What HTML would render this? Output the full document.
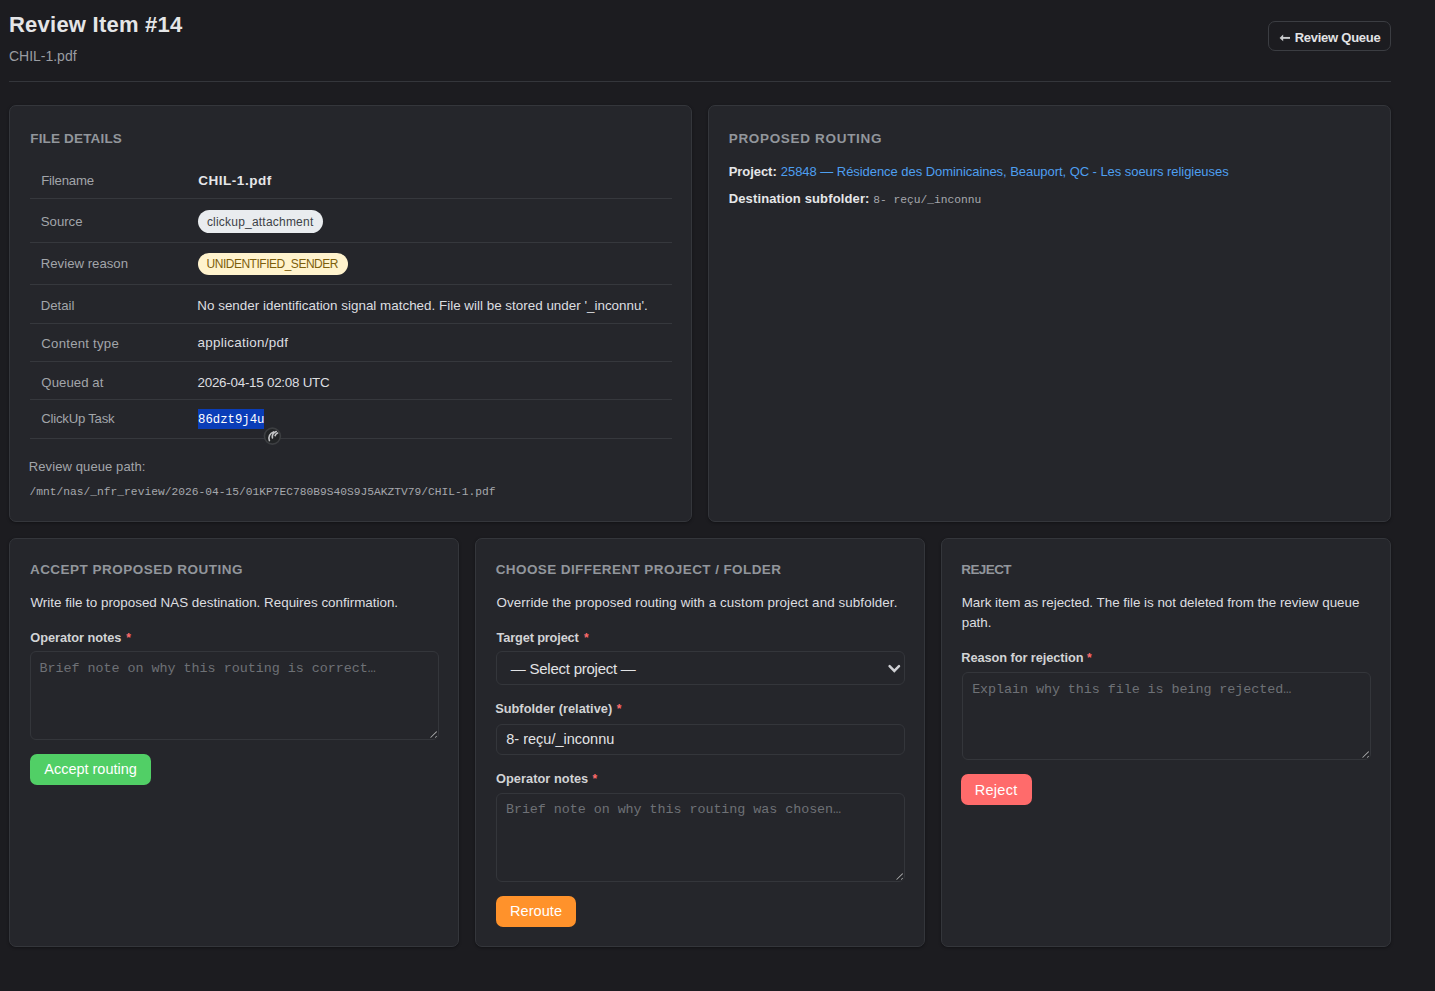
<!DOCTYPE html>
<html><head><meta charset="utf-8"><title>Review Item #14</title>
<style>
html,body{margin:0;padding:0}
body{width:1435px;height:991px;overflow:hidden;position:relative;background:#1c1c20;font-family:"Liberation Sans",sans-serif}
.b{position:absolute;box-sizing:border-box}
.t{position:absolute;white-space:pre;line-height:1.15}
</style></head><body>
<div id="hr" class="b" style="left:9px;top:81px;width:1382px;height:1px;background:#34363b"></div>
<div id="backbtn" class="b" style="left:1268px;top:21px;width:123px;height:30px;border:1px solid #3b3d42;border-radius:7px"></div>
<div id="card1" class="b" style="left:9px;top:105px;width:683px;height:417px;background:#25262b;border:1px solid #34363b;border-radius:7px;box-shadow:0 1px 3px rgba(0,0,0,.35)"></div>
<div id="card2" class="b" style="left:708px;top:105px;width:683px;height:417px;background:#25262b;border:1px solid #34363b;border-radius:7px;box-shadow:0 1px 3px rgba(0,0,0,.35)"></div>
<div id="card3" class="b" style="left:9px;top:538px;width:450px;height:409px;background:#25262b;border:1px solid #34363b;border-radius:7px;box-shadow:0 1px 3px rgba(0,0,0,.35)"></div>
<div id="card4" class="b" style="left:475px;top:538px;width:450px;height:409px;background:#25262b;border:1px solid #34363b;border-radius:7px;box-shadow:0 1px 3px rgba(0,0,0,.35)"></div>
<div id="card5" class="b" style="left:941px;top:538px;width:450px;height:409px;background:#25262b;border:1px solid #34363b;border-radius:7px;box-shadow:0 1px 3px rgba(0,0,0,.35)"></div>
<div id="rl0" class="b" style="left:30px;top:198px;width:642px;height:1px;background:#36383d"></div>
<div id="rl1" class="b" style="left:30px;top:242px;width:642px;height:1px;background:#36383d"></div>
<div id="rl2" class="b" style="left:30px;top:284px;width:642px;height:1px;background:#36383d"></div>
<div id="rl3" class="b" style="left:30px;top:323px;width:642px;height:1px;background:#36383d"></div>
<div id="rl4" class="b" style="left:30px;top:361px;width:642px;height:1px;background:#36383d"></div>
<div id="rl5" class="b" style="left:30px;top:399px;width:642px;height:1px;background:#36383d"></div>
<div id="rl6" class="b" style="left:30px;top:438px;width:642px;height:1px;background:#36383d"></div>
<div id="pill1" class="b" style="left:198px;top:210px;width:125px;height:23px;background:#e9ecef;border-radius:12px"></div>
<div id="pill2" class="b" style="left:198px;top:253px;width:150px;height:22px;background:#fff3cd;border-radius:11px"></div>
<div id="hl" class="b" style="left:198px;top:409px;width:66px;height:20px;background:#0a3db8"></div>
<div id="ta1" class="b" style="left:30px;top:651px;width:409px;height:89px;border:1px solid #34363b;border-radius:6px;background:#25262b"></div>
<div id="sel" class="b" style="left:496px;top:651px;width:409px;height:34px;border:1px solid #34363b;border-radius:6px;background:#25262b"></div>
<div id="inp" class="b" style="left:496px;top:724px;width:409px;height:31px;border:1px solid #34363b;border-radius:6px;background:#25262b"></div>
<div id="ta2" class="b" style="left:496px;top:793px;width:409px;height:89px;border:1px solid #34363b;border-radius:6px;background:#25262b"></div>
<div id="ta3" class="b" style="left:962px;top:672px;width:409px;height:88px;border:1px solid #34363b;border-radius:6px;background:#25262b"></div>
<div id="btn1" class="b" style="left:30px;top:754px;width:121px;height:31px;background:#51cf66;border-radius:7px"></div>
<div id="btn2" class="b" style="left:496px;top:896px;width:80px;height:31px;background:#ff922b;border-radius:7px"></div>
<div id="btn3" class="b" style="left:961px;top:774px;width:71px;height:31px;background:#ff6b6b;border-radius:7px"></div>
<div id="title" class="t" style="left:9.00px;top:11.82px;font-size:22px;font-weight:bold;font-family:'Liberation Sans', sans-serif;color:#e4e5e7;letter-spacing:0.231px">Review Item #14</div>
<div id="sub" class="t" style="left:8.95px;top:47.72px;font-size:14px;font-weight:normal;font-family:'Liberation Sans', sans-serif;color:#9a9da2;letter-spacing:-0.010px">CHIL-1.pdf</div>
<div id="back" class="t" style="left:1294.70px;top:31.00px;font-size:13px;font-weight:bold;font-family:'Liberation Sans', sans-serif;color:#e2e3e5;letter-spacing:-0.261px">Review Queue</div>
<div id="s1" class="t" style="left:30.27px;top:131.40px;font-size:13.5px;font-weight:bold;font-family:'Liberation Sans', sans-serif;color:#92969c;letter-spacing:0.169px">FILE DETAILS</div>
<div id="s2" class="t" style="left:728.70px;top:131.40px;font-size:13.5px;font-weight:bold;font-family:'Liberation Sans', sans-serif;color:#92969c;letter-spacing:0.684px">PROPOSED ROUTING</div>
<div id="s3" class="t" style="left:29.90px;top:562.32px;font-size:13.5px;font-weight:bold;font-family:'Liberation Sans', sans-serif;color:#92969c;letter-spacing:0.488px">ACCEPT PROPOSED ROUTING</div>
<div id="s4" class="t" style="left:495.70px;top:562.32px;font-size:13.5px;font-weight:bold;font-family:'Liberation Sans', sans-serif;color:#92969c;letter-spacing:0.407px">CHOOSE DIFFERENT PROJECT / FOLDER</div>
<div id="s5" class="t" style="left:961.32px;top:562.32px;font-size:13.5px;font-weight:bold;font-family:'Liberation Sans', sans-serif;color:#92969c;letter-spacing:-0.600px">REJECT</div>
<div id="l1" class="t" style="left:41.13px;top:172.72px;font-size:13.2px;font-weight:normal;font-family:'Liberation Sans', sans-serif;color:#a2a5aa;letter-spacing:-0.167px">Filename</div>
<div id="l2" class="t" style="left:40.75px;top:213.82px;font-size:13.2px;font-weight:normal;font-family:'Liberation Sans', sans-serif;color:#a2a5aa;letter-spacing:0.000px">Source</div>
<div id="l3" class="t" style="left:40.75px;top:256.22px;font-size:13.2px;font-weight:normal;font-family:'Liberation Sans', sans-serif;color:#a2a5aa;letter-spacing:0.000px">Review reason</div>
<div id="l4" class="t" style="left:40.75px;top:297.50px;font-size:13.2px;font-weight:normal;font-family:'Liberation Sans', sans-serif;color:#a2a5aa;letter-spacing:0.000px">Detail</div>
<div id="l5" class="t" style="left:41.32px;top:335.60px;font-size:13.2px;font-weight:normal;font-family:'Liberation Sans', sans-serif;color:#a2a5aa;letter-spacing:0.245px">Content type</div>
<div id="l6" class="t" style="left:41.32px;top:374.90px;font-size:13.2px;font-weight:normal;font-family:'Liberation Sans', sans-serif;color:#a2a5aa;letter-spacing:0.056px">Queued at</div>
<div id="l7" class="t" style="left:41.32px;top:411.22px;font-size:13.2px;font-weight:normal;font-family:'Liberation Sans', sans-serif;color:#a2a5aa;letter-spacing:-0.245px">ClickUp Task</div>
<div id="v1" class="t" style="left:198.22px;top:172.72px;font-size:13.5px;font-weight:bold;font-family:'Liberation Sans', sans-serif;color:#e6e7e9;letter-spacing:0.530px">CHIL-1.pdf</div>
<div id="v2" class="t" style="left:206.90px;top:215.82px;font-size:12px;font-weight:normal;font-family:'Liberation Sans', sans-serif;color:#3d4247;letter-spacing:0.212px">clickup_attachment</div>
<div id="v3" class="t" style="left:206.57px;top:258.10px;font-size:12px;font-weight:normal;font-family:'Liberation Sans', sans-serif;color:#7d5f0c;letter-spacing:-0.490px">UNIDENTIFIED_SENDER</div>
<div id="v4" class="t" style="left:197.32px;top:297.50px;font-size:13.4px;font-weight:normal;font-family:'Liberation Sans', sans-serif;color:#dddee0;letter-spacing:0.012px">No sender identification signal matched. File will be stored under '_inconnu'.</div>
<div id="v5" class="t" style="left:197.52px;top:335.40px;font-size:13.4px;font-weight:normal;font-family:'Liberation Sans', sans-serif;color:#dddee0;letter-spacing:0.289px">application/pdf</div>
<div id="v6" class="t" style="left:197.52px;top:374.90px;font-size:13.4px;font-weight:normal;font-family:'Liberation Sans', sans-serif;color:#dddee0;letter-spacing:-0.251px">2026-04-15 02:08 UTC</div>
<div id="v7" class="t" style="left:198.00px;top:413.21px;font-size:12.3px;font-weight:normal;font-family:'Liberation Mono', monospace;color:#ffffff;letter-spacing:0.000px">86dzt9j4u</div>
<div id="rqp" class="t" style="left:28.80px;top:459.50px;font-size:13px;font-weight:normal;font-family:'Liberation Sans', sans-serif;color:#a2a5aa;letter-spacing:0.101px">Review queue path:</div>
<div id="path" class="t" style="left:29.57px;top:485.50px;font-size:11.25px;font-weight:normal;font-family:'Liberation Mono', monospace;color:#a5a8ad;letter-spacing:0.003px">/mnt/nas/_nfr_review/2026-04-15/01KP7EC780B9S40S9J5AKZTV79/CHIL-1.pdf</div>
<div id="pj" class="t" style="left:728.70px;top:164.60px;font-size:13px;font-weight:bold;font-family:'Liberation Sans', sans-serif;color:#e6e7e9;letter-spacing:-0.051px">Project:</div>
<div id="link" class="t" style="left:780.85px;top:164.60px;font-size:13px;font-weight:normal;font-family:'Liberation Sans', sans-serif;color:#4e9ff0;letter-spacing:-0.053px">25848 &mdash; R&eacute;sidence des Dominicaines, Beauport, QC - Les soeurs religieuses</div>
<div id="ds" class="t" style="left:728.70px;top:192.00px;font-size:13px;font-weight:bold;font-family:'Liberation Sans', sans-serif;color:#e6e7e9;letter-spacing:0.133px">Destination subfolder:</div>
<div id="dsv" class="t" style="left:873.13px;top:194.00px;font-size:11.25px;font-weight:normal;font-family:'Liberation Mono', monospace;color:#a5a8ad;letter-spacing:0.006px">8- re&ccedil;u/_inconnu</div>
<div id="d1" class="t" style="left:30.47px;top:594.90px;font-size:13.4px;font-weight:normal;font-family:'Liberation Sans', sans-serif;color:#dddee0;letter-spacing:0.003px">Write file to proposed NAS destination. Requires confirmation.</div>
<div id="d2" class="t" style="left:496.47px;top:594.90px;font-size:13.4px;font-weight:normal;font-family:'Liberation Sans', sans-serif;color:#dddee0;letter-spacing:0.087px">Override the proposed routing with a custom project and subfolder.</div>
<div id="d3" class="t" style="left:961.70px;top:594.50px;font-size:13.4px;font-weight:normal;font-family:'Liberation Sans', sans-serif;color:#dddee0;letter-spacing:-0.015px">Mark item as rejected. The file is not deleted from the review queue</div>
<div id="d3b" class="t" style="left:961.70px;top:614.60px;font-size:13.4px;font-weight:normal;font-family:'Liberation Sans', sans-serif;color:#dddee0;letter-spacing:0.000px">path.</div>
<div id="f1" class="t" style="left:30.27px;top:630.72px;font-size:12.8px;font-weight:bold;font-family:'Liberation Sans', sans-serif;color:#d2d3d5;letter-spacing:-0.048px">Operator notes</div>
<div id="f1a" class="t" style="left:126.27px;top:631.72px;font-size:12px;font-weight:bold;font-family:'Liberation Sans', sans-serif;color:#ff6b6b;letter-spacing:0.000px">*</div>
<div id="f2" class="t" style="left:496.60px;top:631.00px;font-size:12.8px;font-weight:bold;font-family:'Liberation Sans', sans-serif;color:#d2d3d5;letter-spacing:-0.166px">Target project</div>
<div id="f2a" class="t" style="left:583.95px;top:632.00px;font-size:12px;font-weight:bold;font-family:'Liberation Sans', sans-serif;color:#ff6b6b;letter-spacing:0.000px">*</div>
<div id="f3" class="t" style="left:495.13px;top:702.32px;font-size:12.8px;font-weight:bold;font-family:'Liberation Sans', sans-serif;color:#d2d3d5;letter-spacing:0.024px">Subfolder (relative)</div>
<div id="f3a" class="t" style="left:616.65px;top:703.32px;font-size:12px;font-weight:bold;font-family:'Liberation Sans', sans-serif;color:#ff6b6b;letter-spacing:0.000px">*</div>
<div id="f4" class="t" style="left:496.03px;top:772.22px;font-size:12.8px;font-weight:bold;font-family:'Liberation Sans', sans-serif;color:#d2d3d5;letter-spacing:0.035px">Operator notes</div>
<div id="f4a" class="t" style="left:592.47px;top:773.22px;font-size:12px;font-weight:bold;font-family:'Liberation Sans', sans-serif;color:#ff6b6b;letter-spacing:0.000px">*</div>
<div id="f5" class="t" style="left:961.32px;top:651.00px;font-size:12.8px;font-weight:bold;font-family:'Liberation Sans', sans-serif;color:#d2d3d5;letter-spacing:-0.081px">Reason for rejection</div>
<div id="f5a" class="t" style="left:1087.08px;top:652.00px;font-size:12px;font-weight:bold;font-family:'Liberation Sans', sans-serif;color:#ff6b6b;letter-spacing:0.000px">*</div>
<div id="ph1" class="t" style="left:39.42px;top:661.32px;font-size:13.4px;font-weight:normal;font-family:'Liberation Mono', monospace;color:#6e7176;letter-spacing:-0.026px">Brief note on why this routing is correct&hellip;</div>
<div id="ph2" class="t" style="left:505.95px;top:801.90px;font-size:13.4px;font-weight:normal;font-family:'Liberation Mono', monospace;color:#6e7176;letter-spacing:-0.057px">Brief note on why this routing was chosen&hellip;</div>
<div id="ph3" class="t" style="left:972.13px;top:682.00px;font-size:13.4px;font-weight:normal;font-family:'Liberation Mono', monospace;color:#6e7176;letter-spacing:-0.060px">Explain why this file is being rejected&hellip;</div>
<div id="selt" class="t" style="left:510.80px;top:659.82px;font-size:15px;font-weight:normal;font-family:'Liberation Sans', sans-serif;color:#e2e3e5;letter-spacing:-0.244px">&mdash; Select project &mdash;</div>
<div id="inpt" class="t" style="left:506.27px;top:730.72px;font-size:14.5px;font-weight:normal;font-family:'Liberation Sans', sans-serif;color:#e2e3e5;letter-spacing:0.000px">8- re&ccedil;u/_inconnu</div>
<div id="b1" class="t" style="left:44.27px;top:761.32px;font-size:14.5px;font-weight:normal;font-family:'Liberation Sans', sans-serif;color:#ffffff;letter-spacing:-0.014px">Accept routing</div>
<div id="b2" class="t" style="left:510.08px;top:902.82px;font-size:14.5px;font-weight:normal;font-family:'Liberation Sans', sans-serif;color:#ffffff;letter-spacing:0.060px">Reroute</div>
<div id="b3" class="t" style="left:974.75px;top:781.82px;font-size:14.5px;font-weight:normal;font-family:'Liberation Sans', sans-serif;color:#ffffff;letter-spacing:0.270px">Reject</div>
<svg width="1435" height="991" viewBox="0 0 1435 991" style="position:absolute;left:0;top:0;pointer-events:none">
<polyline points="889.6,666.2 894.3,670.9 899,666.2" fill="none" stroke="#cfd0d4" stroke-width="2.5" stroke-linecap="round" stroke-linejoin="miter"/>
<path d="M430.5 737.7L436.7 731.5M435.2 737.7L436.7 736.2" stroke="#000" stroke-opacity=".55" stroke-width="2.2" fill="none"/><path d="M430.5 737.7L436.7 731.5M435.2 737.7L436.7 736.2" stroke="#9a9b9e" stroke-width="1.1" fill="none"/><path d="M896.5 879.7L902.7 873.5M901.2 879.7L902.7 878.2" stroke="#000" stroke-opacity=".55" stroke-width="2.2" fill="none"/><path d="M896.5 879.7L902.7 873.5M901.2 879.7L902.7 878.2" stroke="#9a9b9e" stroke-width="1.1" fill="none"/><path d="M1362.5 757.7L1368.7 751.5M1367.2 757.7L1368.7 756.2" stroke="#000" stroke-opacity=".55" stroke-width="2.2" fill="none"/><path d="M1362.5 757.7L1368.7 751.5M1367.2 757.7L1368.7 756.2" stroke="#9a9b9e" stroke-width="1.1" fill="none"/>
<circle cx="272.4" cy="436.1" r="8" fill="#222426" stroke="#3c3e41" stroke-width="1.6"/>
<path d="M269.4 440.6A6.5 6.5 0 0 1 273.6 431.9M272.4 438A6 6 0 0 1 276.2 431.6M275.1 435.6A4.5 4.5 0 0 1 277.6 433" fill="none" stroke="#c4c5c7" stroke-width="1.6" stroke-linecap="round"/>
<path d="M1290 37.9H1282.3" stroke="#c9cbcd" stroke-width="1.9"/><polygon points="1279.6,37.9 1283.2,34.6 1283.2,41.2" fill="#c9cbcd"/>
</svg>
</body></html>
